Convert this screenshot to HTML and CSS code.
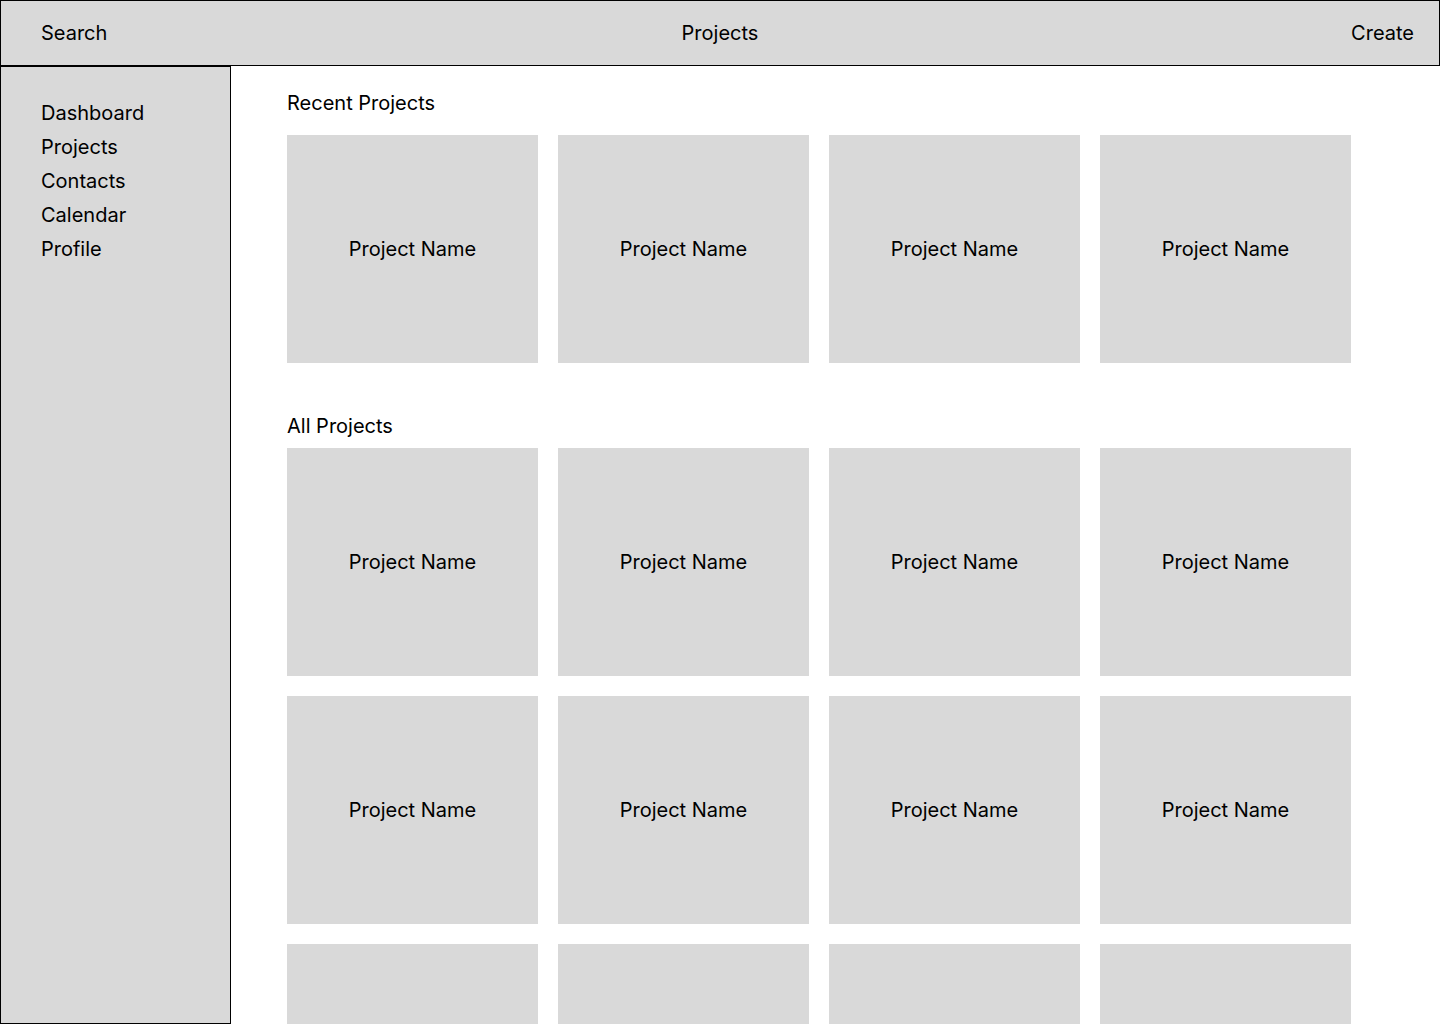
FILE: index.html
```html
<!DOCTYPE html>
<html lang="en">
<head>
    <meta charset="UTF-8">
    <meta name="viewport" content="width=device-width, initial-scale=1.0">
    <title>Projects</title>
    <link rel="stylesheet" href="styles.css">
</head>
<body>
    <header class="topbar">
        <span class="topbar-left">Search</span>
        <span class="topbar-title">Projects</span>
        <span class="topbar-right">Create</span>
    </header>
    <div class="layout">
        <nav class="sidebar">
            <a href="#">Dashboard</a>
            <a href="#">Projects</a>
            <a href="#">Contacts</a>
            <a href="#">Calendar</a>
            <a href="#">Profile</a>
        </nav>
        <main class="content">
            <section class="section recent">
                <h2>Recent Projects</h2>
                <div class="grid">
                    <div class="card">Project Name</div>
                    <div class="card">Project Name</div>
                    <div class="card">Project Name</div>
                    <div class="card">Project Name</div>
                </div>
            </section>
            <section class="section all">
                <h2>All Projects</h2>
                <div class="grid">
                    <div class="card">Project Name</div>
                    <div class="card">Project Name</div>
                    <div class="card">Project Name</div>
                    <div class="card">Project Name</div>
                    <div class="card">Project Name</div>
                    <div class="card">Project Name</div>
                    <div class="card">Project Name</div>
                    <div class="card">Project Name</div>
                    <div class="card">Project Name</div>
                    <div class="card">Project Name</div>
                    <div class="card">Project Name</div>
                    <div class="card">Project Name</div>
                </div>
            </section>
        </main>
    </div>
</body>
</html>
```

FILE: styles.css
```css
* {
    box-sizing: border-box;
}
body {
    font-family: Inter, "Noto Sans", sans-serif;
    font-size: 20px;
    line-height: 24px;
    color: #000;
    margin: 0;
    padding: 0;
    height: 100vh;
    overflow: hidden;
    display: flex;
    flex-direction: column;
    background-color: #fff;
}
.topbar {
    height: 66px;
    flex: none;
    background-color: #d9d9d9;
    border: 1px solid #000;
    display: grid;
    grid-template-columns: 1fr auto 1fr;
    align-items: center;
    padding: 0 25px;
}
.topbar-left {
    padding-left: 15px;
}
.topbar-title {
    text-align: center;
}
.topbar-right {
    text-align: right;
}
.layout {
    flex: 1;
    min-height: 0;
    display: flex;
}
.sidebar {
    width: 231px;
    flex: none;
    background-color: #d9d9d9;
    border: 1px solid #000;
    padding: 34px 0 0 40px;
    display: flex;
    flex-direction: column;
    gap: 10px;
}
.sidebar a {
    color: #000;
    text-decoration: none;
}
.content {
    flex: 1;
    padding: 25px 0 0 56px;
    overflow: hidden;
}
.section h2 {
    font-size: 20px;
    font-weight: 400;
    line-height: 24px;
    margin: 0 0 20px;
}
.section.all {
    margin-top: 51px;
}
.section.all h2 {
    margin-bottom: 10px;
}
.grid {
    display: grid;
    grid-template-columns: repeat(4, 251px);
    grid-auto-rows: 228px;
    gap: 20px;
}
.card {
    background-color: #d9d9d9;
    display: flex;
    align-items: center;
    justify-content: center;
}
```
